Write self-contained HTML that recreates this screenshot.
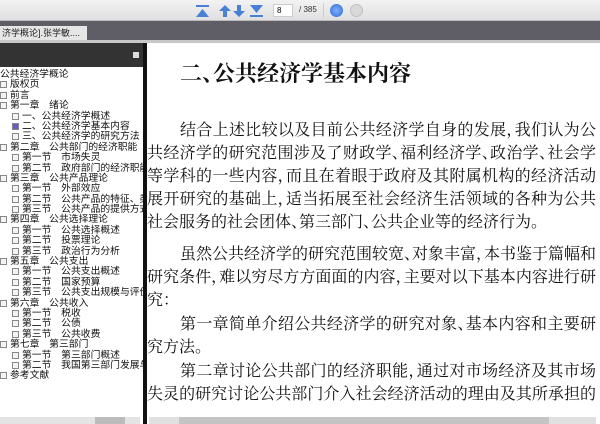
<!DOCTYPE html>
<html><head><meta charset="utf-8"><style>
*{margin:0;padding:0;box-sizing:border-box}
body{width:600px;height:424px;overflow:hidden;position:relative;background:#fff;font-family:"Liberation Sans","Noto Sans CJK SC",sans-serif}
.tb{position:absolute;left:0;top:0;width:600px;height:21px;background:linear-gradient(#f2f2f2,#e0e0e0);border-bottom:1px solid #bbb}
.tabbar{position:absolute;left:0;top:21px;width:600px;height:19px;background:#5f5e66}
.tab{position:absolute;left:0;top:5px;width:87px;height:14px;background:#e6e6e6;font-size:9px;line-height:14px;color:#222;padding-left:2px;white-space:nowrap;overflow:hidden}
.strip{position:absolute;left:0;top:40px;width:600px;height:3px;background:#c8c8c8}
.lp{position:absolute;left:0;top:43px;width:144px;height:381px;background:#fff}
.lph{position:absolute;left:0;top:0;width:144px;height:24px;background:#333}
.div{position:absolute;left:143px;top:43px;width:4px;height:381px;background:#111}
.tree{position:absolute;left:0;top:27px;font-size:9.8px;color:#111;line-height:10.4px;white-space:nowrap}
.tree div{height:10.4px}
.b{display:inline-block;width:7px;height:7px;border:1px solid #888;background:#f4f4f4;vertical-align:-1px;margin-right:3px}
.l1{padding-left:0}.l2{padding-left:12px}
.ct{position:absolute;left:147px;top:43px;width:453px;height:381px;background:#fff;font-family:"Liberation Serif","Noto Serif CJK SC","Noto Serif CJK JP",serif;color:#111;overflow:hidden}
.t{position:absolute;left:33px;top:14px;font-size:22px;font-weight:bold;font-family:"Liberation Serif","Noto Serif CJK SC",serif;white-space:nowrap}
.t i,.ln i{font-style:normal;display:inline-block;width:.5em;overflow:hidden;vertical-align:top}
.ln{position:absolute;left:0;width:449px;font-size:16px;height:24px;line-height:24px;text-align:justify;text-align-last:justify;text-justify:inter-character;white-space:nowrap}
.ind{padding-left:33px}
.nj{text-align-last:left}
</style></head><body>
<div class="tb">
<svg style="position:absolute;left:195px;top:3px" width="140" height="16">
<g fill="#4a7fd6"><rect x="1" y="2" width="13" height="2"/><path d="M1 14h13l-6.5-8z"/>
<path d="M30 2l-6 6h4v6h4v-6h4z"/>
<path d="M44 14l-6-6h4v-6h4v6h4z"/>
<rect x="55" y="12" width="13" height="2"/><path d="M55 2h13l-6.5 8z"/></g>
</svg>
<div style="position:absolute;left:273px;top:4px;width:20px;height:13px;background:#fff;border:1px solid #ccc;font-size:8px;line-height:11px;padding-left:3px">8</div>
<div style="position:absolute;left:299px;top:5px;font-size:8px;color:#333">/ 385</div>
<div style="position:absolute;left:323px;top:3px;width:1px;height:15px;background:#ccc"></div>
<div style="position:absolute;left:330px;top:4px;width:13px;height:13px;border-radius:50%;background:radial-gradient(#7fb0ff,#2f6ad0)"></div>
<div style="position:absolute;left:350px;top:4px;width:13px;height:13px;border-radius:50%;background:#d8d8d8;border:1px solid #c0c0c0"></div>
</div>
<div class="tabbar"><div class="tab">济学概论].张学敏.... &nbsp; ✕</div></div>
<div class="strip"></div>
<div class="lp"><div class="lph"><div style="position:absolute;left:133px;top:9px;width:6px;height:6px;background:#ddd"></div></div>
<div class="tree">
<div class="l1">公共经济学概论</div>
<div class="l1"><span class="b"></span>版权页</div>
<div class="l1"><span class="b"></span>前言</div>
<div class="l1"><span class="b"></span>第一章　绪论</div>
<div class="l2"><span class="b"></span>一、公共经济学概述</div>
<div class="l2"><span class="b" style="background:#6a5acd"></span>二、公共经济学基本内容</div>
<div class="l2"><span class="b"></span>三、公共经济学的研究方法</div>
<div class="l1"><span class="b"></span>第二章　公共部门的经济职能</div>
<div class="l2"><span class="b"></span>第一节　市场失灵</div>
<div class="l2"><span class="b"></span>第二节　政府部门的经济职能</div>
<div class="l1"><span class="b"></span>第三章　公共产品理论</div>
<div class="l2"><span class="b"></span>第一节　外部效应</div>
<div class="l2"><span class="b"></span>第二节　公共产品的特征、类</div>
<div class="l2"><span class="b"></span>第三节　公共产品的提供方式</div>
<div class="l1"><span class="b"></span>第四章　公共选择理论</div>
<div class="l2"><span class="b"></span>第一节　公共选择概述</div>
<div class="l2"><span class="b"></span>第二节　投票理论</div>
<div class="l2"><span class="b"></span>第三节　政治行为分析</div>
<div class="l1"><span class="b"></span>第五章　公共支出</div>
<div class="l2"><span class="b"></span>第一节　公共支出概述</div>
<div class="l2"><span class="b"></span>第二节　国家预算</div>
<div class="l2"><span class="b"></span>第三节　公共支出规模与评价</div>
<div class="l1"><span class="b"></span>第六章　公共收入</div>
<div class="l2"><span class="b"></span>第一节　税收</div>
<div class="l2"><span class="b"></span>第二节　公债</div>
<div class="l2"><span class="b"></span>第三节　公共收费</div>
<div class="l1"><span class="b"></span>第七章　第三部门</div>
<div class="l2"><span class="b"></span>第一节　第三部门概述</div>
<div class="l2"><span class="b"></span>第二节　我国第三部门发展与</div>
<div class="l1"><span class="b"></span>参考文献</div>
</div>
<div style="position:absolute;left:0;top:374px;width:140px;height:7px;background:#e4e4e4"><div style="position:absolute;left:95px;top:0;width:30px;height:7px;background:#bbb"></div></div>
</div>
<div class="div"></div>
<div class="ct">
<div class="t">二<i>、</i>公共经济学基本内容</div>
<div class="ln ind" style="top:76px">结合上述比较以及目前公共经济学自身的发展<i>，</i>我们认为公</div>
<div class="ln" style="top:99px">共经济学的研究范围涉及了财政学<i>、</i>福利经济学<i>、</i>政治学<i>、</i>社会学</div>
<div class="ln" style="top:122px">等学科的一些内容<i>，</i>而且在着眼于政府及其附属机构的经济活动</div>
<div class="ln" style="top:145px">展开研究的基础上<i>，</i>适当拓展至社会经济生活领域的各种为公共</div>
<div class="ln nj" style="top:168px">社会服务的社会团体<i>、</i>第三部门<i>、</i>公共企业等的经济行为。</div>
<div class="ln ind" style="top:200px">虽然公共经济学的研究范围较宽<i>、</i>对象丰富<i>，</i>本书鉴于篇幅和</div>
<div class="ln" style="top:223px">研究条件<i>，</i>难以穷尽方方面面的内容<i>，</i>主要对以下基本内容进行研</div>
<div class="ln nj" style="top:246px">究：</div>
<div class="ln ind" style="top:270px">第一章简单介绍公共经济学的研究对象<i>、</i>基本内容和主要研</div>
<div class="ln nj" style="top:293px">究方法。</div>
<div class="ln ind" style="top:317px">第二章讨论公共部门的经济职能<i>，</i>通过对市场经济及其市场</div>
<div class="ln" style="top:340px">失灵的研究讨论公共部门介入社会经济活动的理由及其所承担的</div>
<div style="position:absolute;left:2px;top:374px;width:447px;height:7px;background:#e0e0e0"><div style="position:absolute;left:30px;top:0;width:370px;height:7px;background:#c4c4c4"></div></div>
</div>
</body></html>
